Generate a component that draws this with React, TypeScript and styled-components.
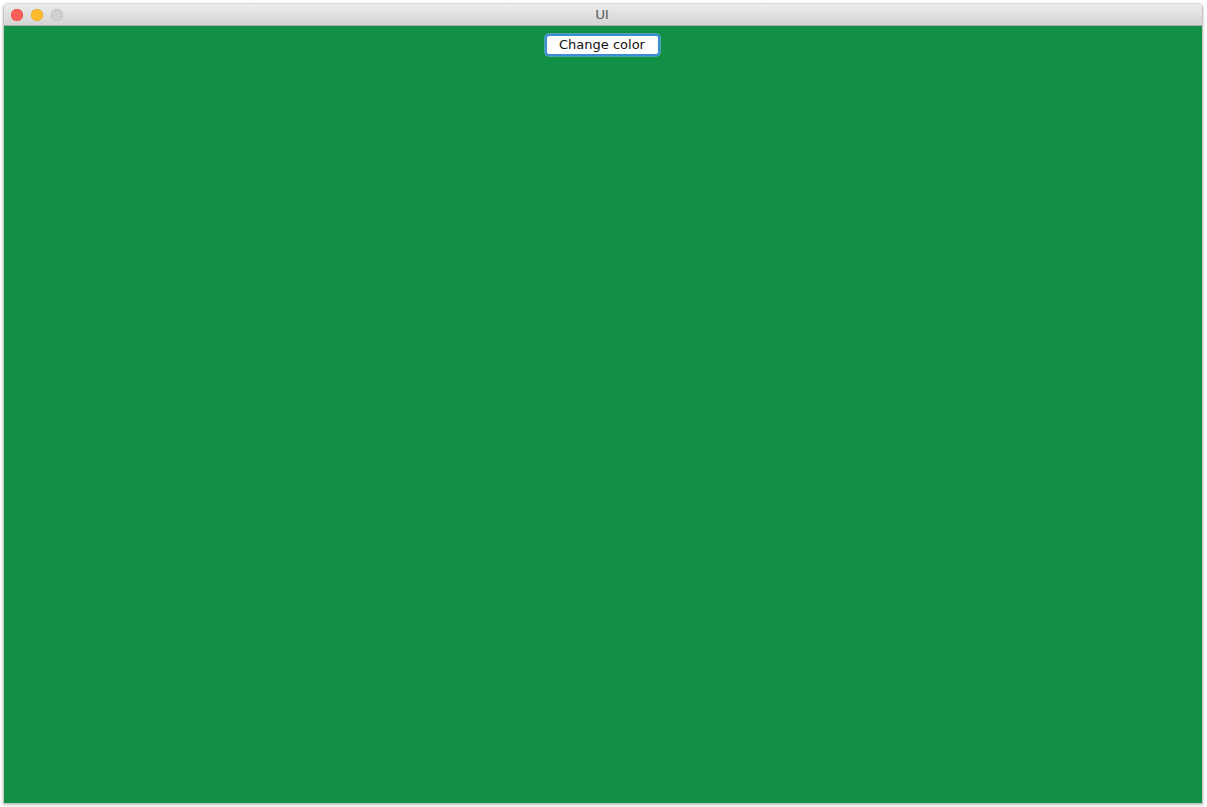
import React from "react";
import styled, { createGlobalStyle } from "styled-components";

const Global = createGlobalStyle`
  html, body { margin: 0; padding: 0; background: #ffffff; }
  body { font-family: "Liberation Sans", Arial, sans-serif; }
`;

const Page = styled.div`
  width: 1207px;
  height: 807px;
  padding: 3px 4px 3px 3px;
  box-sizing: border-box;
  display: flex;
`;

const Window = styled.div`
  flex: 1;
  display: flex;
  flex-direction: column;
  border-radius: 5px 5px 0 0;
  border: 1px solid #c4c4c4;
  border-top-color: #d6d6d6;
  box-shadow: 0 1px 3px rgba(0, 0, 0, 0.25);
  overflow: hidden;
`;

const TitleBar = styled.div`
  height: 21px;
  flex: none;
  position: relative;
  display: flex;
  align-items: center;
  justify-content: center;
  padding-right: 2px;
  background: linear-gradient(#ececec, #d4d4d4);
  border-bottom: 1px solid #a9a9a9;
  font-family: "Liberation Sans", Arial, sans-serif;
  font-size: 13px;
  color: #4d4d4d;
`;

const Lights = styled.div`
  position: absolute;
  left: 7px;
  top: 5px;
  display: flex;
  gap: 8px;
`;

const Light = styled.span<{ $c: string; $b: string }>`
  width: 12px;
  height: 12px;
  border-radius: 50%;
  background: ${(p) => p.$c};
  box-shadow: inset 0 0 0 0.5px ${(p) => p.$b};
`;

const Content = styled.div`
  flex: 1;
  background: #129046;
  display: flex;
  flex-direction: column;
  align-items: center;
  padding-top: 8px;
  padding-right: 2px;
`;

const Button = styled.button`
  width: 115px;
  height: 22px;
  background: #ffffff;
  border: 2px solid #3b8ed6;
  border-radius: 4px;
  box-shadow: 0 0 0 1px rgba(120, 180, 230, 0.6);
  font-family: "DejaVu Sans", "Liberation Sans", sans-serif;
  font-size: 13px;
  color: #111;
  padding: 0;
  line-height: 16px;
`;

export default function App() {
  return (
    <>
      <Global />
      <Page>
        <Window>
          <TitleBar>
            <Lights>
              <Light $c="#fc5f57" $b="#e0443e" />
              <Light $c="#fdbc2e" $b="#dea123" />
              <Light $c="#d0d0d0" $b="#b8b8b8" />
            </Lights>
            UI
          </TitleBar>
          <Content>
            <Button>Change color</Button>
          </Content>
        </Window>
      </Page>
    </>
  );
}
